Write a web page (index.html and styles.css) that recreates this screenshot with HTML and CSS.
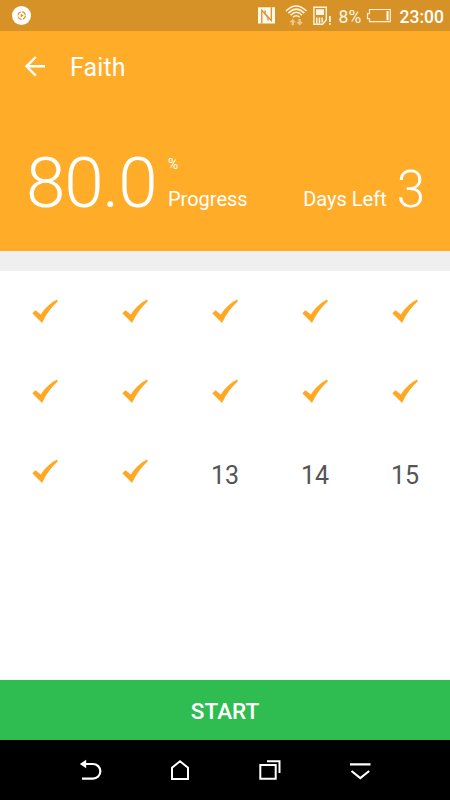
FILE: index.html
```
<!DOCTYPE html>
<html lang="en">
<head>
<meta charset="utf-8">
<title>Faith</title>
<link rel="stylesheet" href="styles.css">
</head>
<body>
<svg class="defs" width="0" height="0">
  <symbol id="check" viewBox="0 0 28 26"><path d="M1.300 14.200 4.500 11.200l5.300 4.300C14 9 19.500 3.800 26 .6l.9 1.700C20.500 8 15.500 15 11 24z"/></symbol>
</svg>
<div class="status">
  <svg class="status-app" width="20" height="20" viewBox="0 0 20 20"><circle cx="9.500" cy="9.500" r="9.500" fill="#fff"/><circle cx="9.700" cy="9.600" r="3.700" fill="none" stroke="#d79b3c" stroke-width="1.200" stroke-dasharray="4.500 1.300"/><path d="M8.700 7.700v3.800l3-1.900z" fill="#d79227"/></svg>
  <svg class="status-icons" width="78" height="24" viewBox="254 4 78 24">
    <path fill="#fff8ec" d="M257 7.300h17v16.200h-17z"/>
    <path fill="none" stroke="#d79227" stroke-width="1.300" d="M260.800 23.500V10.200l6.200 7.300v3M270.300 7.300v13.300l-6.300-7.300v-3"/>
    <g fill="none" stroke="#fff3de" stroke-width="1.500"><path d="M285 11q10-10 20.500 0M287.300 13.100q8-8 16 0M289.600 15.200q5.700-6 11.400 0M292 17.200q3.300-3 6.600 0"/></g>
    <path fill="#efc688" d="m291.700 18.800 3.200 3.500H293v2.900h-2.400v-2.900h-2zM298.700 25.500l-3.300-3.500h2v-2.900h2.400V22h2.200z"/>
    <path fill="none" stroke="#fff5e4" stroke-width="1.400" d="M312.900 7.200h12.400v12.500l-3.600 4.500h-8.800z"/>
    <path fill="#fff5e4" d="M315 9.200h8v5.700h-8zM315 17.500h1.500v6H315zm2.700 0h1.500v6h-1.500zm2.700 0h1.500v5h-1.500zM328 16h1.800v6H328zm0 7h1.800v1.700H328z"/>
  </svg>
  <span class="battery-text">8%</span>
  <svg class="battery" width="26" height="16" viewBox="365 8 26 16"><path fill="none" stroke="#fff0d8" stroke-width="1.200" d="M368.500 9.500h20.800v12.200h-20.800v-3h-2v-5h2z"/><path fill="#fff" d="M385.500 11h2v9.300h-2z"/></svg>
  <span class="clock">23:00</span>
</div>
<header class="header">
  <div class="toolbar">
    <svg width="22" height="22" viewBox="0 0 22 22"><path fill="none" stroke="#fff" stroke-width="2.400" d="M21 10.300H3M11.800 1 2.500 10.300l9.300 9.300"/></svg>
    <h1 class="title">Faith</h1>
  </div>
  <div class="stats">
    <span class="percent">80.0</span>
    <div class="progress"><span class="unit">%</span><span class="label">Progress</span></div>
    <span class="label days">Days Left</span>
    <span class="left">3</span>
  </div>
</header>
<div class="divider"></div>
<main class="grid">
  <div class="day"><svg class="check"><use href="#check"/></svg></div>
  <div class="day"><svg class="check"><use href="#check"/></svg></div>
  <div class="day"><svg class="check"><use href="#check"/></svg></div>
  <div class="day"><svg class="check"><use href="#check"/></svg></div>
  <div class="day"><svg class="check"><use href="#check"/></svg></div>
  <div class="day"><svg class="check"><use href="#check"/></svg></div>
  <div class="day"><svg class="check"><use href="#check"/></svg></div>
  <div class="day"><svg class="check"><use href="#check"/></svg></div>
  <div class="day"><svg class="check"><use href="#check"/></svg></div>
  <div class="day"><svg class="check"><use href="#check"/></svg></div>
  <div class="day"><svg class="check"><use href="#check"/></svg></div>
  <div class="day"><svg class="check"><use href="#check"/></svg></div>
  <div class="day number">13</div>
  <div class="day number">14</div>
  <div class="day number">15</div>
</main>
<button class="start">START</button>
<nav class="nav">
  <svg viewBox="75 755 30 30"><path fill="none" stroke="#fff" stroke-width="2.200" d="M84 764h9a7.200 7.200 0 0 1 0 14.700H82"/><path fill="#fff" d="m79.800 764 6.400-4.300v8.600z"/></svg>
  <svg viewBox="165 755 30 30"><path fill="none" stroke="#fff" stroke-width="2" d="M172 779v-11.200l8-6.600 8 6.600V779z"/></svg>
  <svg viewBox="255 755 30 30"><path fill="none" stroke="#fff" stroke-width="2" d="M260.300 765h15.400v13.700h-15.400zM267 761.200h12.500V773"/></svg>
  <svg viewBox="345 755 30 30"><path fill="none" stroke="#fff" stroke-width="2.200" d="M350 764.300h20.500M351.500 771l8.800 7 8.900-7"/></svg>
</nav>
</body>
</html>
```
FILE: styles.css
```
* { box-sizing: border-box; }
body {
  margin: 0;
  width: 450px;
  height: 800px;
  display: flex;
  flex-direction: column;
  overflow: hidden;
  background: #fff;
  font-family: Roboto, sans-serif;
  color: #fff;
}
svg { display: block; flex: none; }
.defs { position: absolute; }
.status {
  flex: none;
  height: 31px;
  padding: 0 6px 0 12px;
  display: flex;
  align-items: center;
  background: #d79227;
}
.status-icons { margin-left: auto; }
.battery-text { width: 33px; padding-left: 6px; margin-top: 2px; font-size: 17.5px; line-height: 20px; color: #fff5e4; }
.battery { margin-top: 1px; }
.clock { margin-left: 8px; margin-top: 2px; font-size: 17.5px; line-height: 20px; font-weight: 500; }
.header { flex: none; height: 220px; background: #ffac28; }
.toolbar { display: flex; align-items: center; height: 72px; padding-left: 24px; gap: 24px; }
.title { margin: 0; font-size: 25px; font-weight: 400; line-height: 30px; letter-spacing: .1px; padding-top: 2px; }
.stats { display: flex; align-items: baseline; padding: 37px 25px 0 26px; }
.percent { width: 142px; font-size: 71px; line-height: 86px; font-weight: 300; letter-spacing: -1.2px; white-space: nowrap; }
.progress { display: flex; flex-direction: column; align-items: flex-start; align-self: flex-start; padding-top: 15px; }
.unit { font-size: 14px; line-height: 18px; }
.label { font-size: 20px; line-height: 24px; }
.progress .label { margin-top: 14px; }
.days { margin-left: auto; position: relative; top: -1px; }
.left { margin-left: 10px; font-size: 51px; line-height: 60px; font-weight: 300; }
.divider { flex: none; height: 20px; background: #efefef; }
.grid {
  flex: 1;
  display: grid;
  grid-template-columns: repeat(5, 90px);
  grid-auto-rows: 80px;
}
.day { display: flex; align-items: center; justify-content: center; }
.check { width: 28px; height: 26px; margin-top: 2px; fill: #ffa922; }
.number { font-size: 25px; color: #555; padding-top: 8px; }
.start {
  flex: none;
  height: 60px;
  border: 0;
  padding: 2px 0 0;
  background: #2fbc50;
  color: #fff;
  font: 500 22.500px/28px Roboto, sans-serif;
}
.nav { flex: none; height: 60px; padding: 0 45px; display: flex; align-items: center; background: #000; }
.nav svg { width: 30px; height: 30px; margin: 0 30px; }
```
